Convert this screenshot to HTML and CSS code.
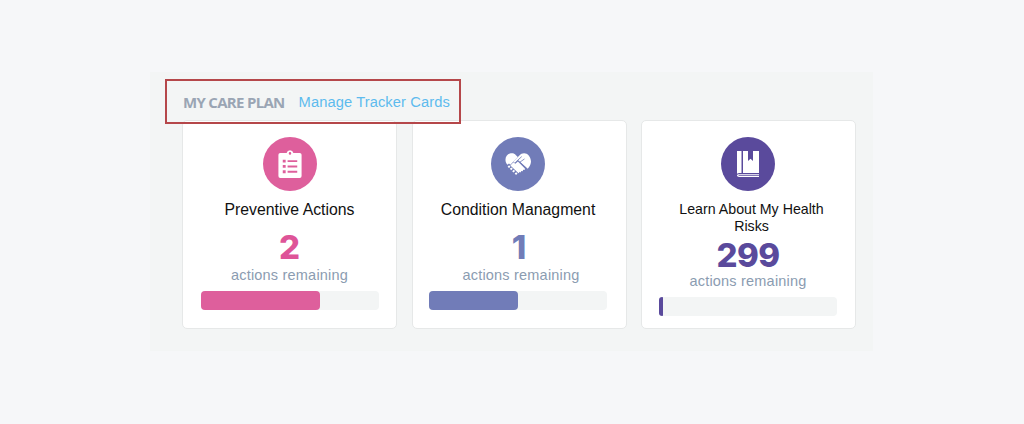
FILE: index.html
```html
<!DOCTYPE html>
<html lang="en">
<head>
    <meta charset="UTF-8">
    <meta name="viewport" content="width=device-width, initial-scale=1.0">
    <title>My Care Plan</title>
    <link rel="stylesheet" href="styles.css">
</head>
<body>
    <div class="panel">
        <div class="highlight"></div>
        <div class="panel-head">
            <h2 class="panel-title">MY CARE PLAN</h2>
            <a class="manage-link" href="#">Manage Tracker Cards</a>
        </div>
        <div class="cards">
            <div class="card card-pink">
                <div class="card-icon">
                    <svg width="24" height="28" viewBox="1 0 24 29">
                        <path fill="#fff" fill-rule="evenodd" d="M3 3h6.500a3.600 3.600 0 0 1 7 0H23a2 2 0 0 1 2 2v22a2 2 0 0 1-2 2H3a2 2 0 0 1-2-2V5a2 2 0 0 1 2-2zM13 2.200a1.300 1.300 0 1 0 0 2.600 1.300 1.300 0 0 0 0-2.600zM5.500 10v3h3v-3zM10.500 10.500v2h10v-2zM5.500 15.500v3h3v-3zM10.500 16v2h10v-2zM5.500 21v3h3v-3zM10.500 21.500v2h10v-2z"/>
                    </svg>
                </div>
                <h3 class="card-title">Preventive Actions</h3>
                <div class="card-count">2</div>
                <div class="card-label">actions remaining</div>
                <div class="bar"><div class="bar-fill" style="width: 67%"></div></div>
            </div>
            <div class="card card-blue card-second">
                <div class="card-icon">
                    <svg width="26" height="25" viewBox="0 0 28 26">
                        <path fill="#fff" d="M7.500 1C3.400 1 .5 4 .5 7.800c0 2.200.8 3.900 2.200 5.500l1.600-1.500 1.500 1.400 5-5.200 3-3.100L11.800 3C10.500 1.700 9.200 1 7.500 1z"/>
                        <path fill="#fff" d="M20.500 1c-2 0-3.600.9-5 2.300L9 9.800l1.300 1.300 3.700-3 10.500 9.400 1.400-1.700c1.300-2 2.100-4 2.100-6.300C27.500 4.600 24.500 1 20.500 1z"/>
                        <path fill="#fff" d="M13.900 9.700l-2.800 2.400L9 10.500 5.800 14l8.200 8 1 .4.600-1.500 1.300.7.600-1.600 1.600.4.400-1.700 1.700.1.200-1.500z"/>
                        <path fill="#fff" d="M2.800 15.300l1.600-1.500 1.500 1.500-1.600 1.500zM5.200 17.700l1.700-1.600 1.500 1.500-1.700 1.600zM7.700 20.200l1.700-1.600 1.500 1.500-1.700 1.600zM10.400 22.800l1.600-1.500 1.500 1.500-1.600 1.500z"/>
                        <path fill="none" stroke="#717cb8" stroke-width="0.9" d="M18 4.500l-6 5.500M21 7l-5 3.500 7 6.500"/>
                    </svg>
                </div>
                <h3 class="card-title">Condition Managment</h3>
                <div class="card-count">1</div>
                <div class="card-label">actions remaining</div>
                <div class="bar"><div class="bar-fill" style="width: 50%"></div></div>
            </div>
            <div class="card card-purple card-long">
                <div class="card-icon">
                    <svg width="22" height="26" viewBox="1 1 22 26">
                        <path fill="#fff" fill-rule="evenodd" d="M1 1h4.500v22H3.200c-.7 0-1.300.3-2.200.8zM7 1h5v10l2.500-2.200L17 11V1h6v22H7zM3.200 24.200H23v1H3.200c-.5 0-.8.100-1 .3.300.3.600.4 1 .4H23V27H3.200C2 27 1 26.500 1 25.600c0-.9 1-1.400 2.200-1.400z"/>
                    </svg>
                </div>
                <h3 class="card-title">Learn About My Health Risks</h3>
                <div class="card-count">299</div>
                <div class="card-label">actions remaining</div>
                <div class="bar"><div class="bar-fill" style="width: 2.500%"></div></div>
            </div>
        </div>
    </div>
</body>
</html>
```

FILE: styles.css
```css
html, body {
    height: 100%;
}
body {
    margin: 0;
    padding: 72px 151px 73px 150px;
    box-sizing: border-box;
    background: #f6f7f9;
    font-family: "Liberation Sans", Arial, sans-serif;
}
.panel {
    position: relative;
    height: 279px;
    padding: 0 18px 0 32px;
    box-sizing: border-box;
    background: #f3f5f5;
}
.highlight {
    position: absolute;
    left: 15px;
    top: 7px;
    width: 296px;
    height: 45px;
    box-sizing: border-box;
    border: 2px solid #b5474a;
}
.panel-head {
    display: flex;
    align-items: center;
    gap: 14px;
    height: 48px;
    padding: 11px 0 0 1px;
    box-sizing: border-box;
}
.panel-title {
    margin: 0;
    font-family: "Open Sans", sans-serif;
    font-size: 15px;
    font-weight: 700;
    letter-spacing: -0.7px;
    color: #9aa5b4;
}
.manage-link {
    font-size: 14.700px;
    letter-spacing: 0.1px;
    color: #5dbbee;
    text-decoration: none;
}
.cards {
    display: flex;
    gap: 15px;
}
.card {
    display: flex;
    flex-direction: column;
    align-items: center;
    flex: none;
    width: 215px;
    height: 209px;
    padding: 16px 17.500px 0;
    box-sizing: border-box;
    background: #fff;
    border: 1px solid #e6e8e8;
    border-radius: 5px;
}
.card-second {
    margin-right: -1.500px;
    padding: 16px 19.500px 0 16.500px;
}
.card-second .card-count {
    margin-left: 2px;
}
.card-second .card-label {
    margin-left: 6px;
}
.card-icon {
    display: flex;
    align-items: center;
    justify-content: center;
    flex: none;
    width: 54px;
    height: 54px;
    border-radius: 50%;
}
.card-title {
    margin: 10px 0 0;
    font-size: 15.800px;
    font-weight: 400;
    line-height: 18px;
    text-align: center;
    color: #111;
}
.card-count {
    margin-top: 12px;
    font-family: "Inter", sans-serif;
    font-size: 33px;
    font-weight: 800;
    line-height: 32px;
}
.card-label {
    margin-top: 3px;
    font-size: 14.500px;
    letter-spacing: 0.2px;
    line-height: 18px;
    color: #8b9cb1;
}
.bar {
    width: 178px;
    height: 19px;
    margin-top: 7px;
    flex: none;
    background: #f3f5f5;
    border-radius: 4px;
}
.bar-fill {
    height: 100%;
    border-radius: 4px;
}
.card-long .card-title {
    width: 150px;
    margin: 10px 0 0 7px;
    font-size: 14.200px;
    line-height: 17px;
}
.card-long .card-count {
    margin-top: 4px;
    letter-spacing: -0.5px;
}
.card-long .card-label {
    margin-top: 1px;
}
.card-long .bar-fill {
    border-radius: 4px 1px 1px 4px;
}
.card-pink .card-icon, .card-pink .bar-fill {
    background: #de5f9c;
}
.card-pink .card-count {
    color: #de5498;
}
.card-blue .card-icon, .card-blue .bar-fill {
    background: #717cb8;
}
.card-blue .card-count {
    color: #717cb8;
}
.card-purple .card-icon, .card-purple .bar-fill {
    background: #5a4a9c;
}
.card-purple .card-count {
    color: #5a4a9c;
}
```
